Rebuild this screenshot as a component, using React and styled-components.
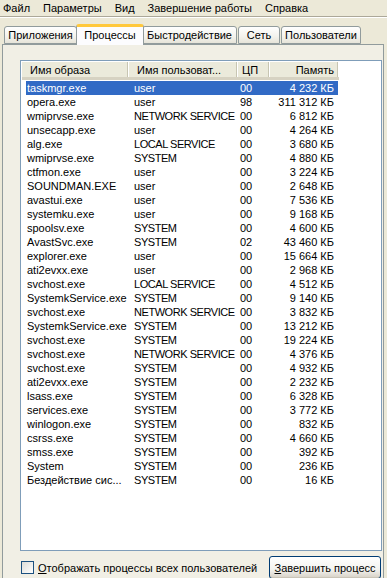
import React from 'react'
import styled, { createGlobalStyle } from 'styled-components'

const GlobalStyle = createGlobalStyle`
  html, body {
    margin: 0;
    padding: 0;
    background: #ece9d8;
  }
  body {
    font-family: Tahoma, "Liberation Sans", Arial, sans-serif;
    font-size: 11px;
    color: #000;
  }
`

const Window = styled.div`
  width: 387px;
  height: 578px;
  overflow: hidden;
  background: #ece9d8;
`

const MenuBar = styled.div`
  display: flex;
  height: 16px;
  align-items: center;
  padding-left: 3px;
  gap: 13px;
  border-bottom: 1px solid #aca899;
  box-shadow: 0 1px 0 #fff;
`

const MenuItem = styled.span`
  line-height: 14px;
`

const TabStrip = styled.div`
  display: flex;
  align-items: flex-end;
  height: 21px;
  margin-top: 7px;
  padding-left: 4px;
  position: relative;
  z-index: 1;
`

const Tab = styled.div`
  box-sizing: border-box;
  width: ${p => p.width}px;
  height: ${p => (p.active ? 21 : 18)}px;
  margin: ${p => (p.active ? '0 -2px 0 -2px' : '0 1px 1px 0')};
  display: flex;
  align-items: ${p => (p.active ? 'flex-start' : 'center')};
  justify-content: center;
  padding-top: ${p => (p.active ? '2px' : '0')};
  border: 1px solid #919b9c;
  border-bottom: ${p => (p.active ? 'none' : '1px solid #919b9c')};
  border-radius: 3px 3px 0 0;
  background: ${p => (p.active ? '#fcfcfe' : 'linear-gradient(#ffffff, #f3f2ec 60%, #e6e4d9)')};
  border-top: ${p => (p.active ? '3px solid #ffc83c' : '1px solid #919b9c')};
  white-space: nowrap;
  position: relative;
  z-index: ${p => (p.active ? 2 : 1)};
`

const Panel = styled.div`
  margin: -1px 3px 0 2px;
  height: 560px;
  border: 1px solid #919b9c;
  background: #f1efe5;
  padding: 15px 1px 0 17px;
  box-sizing: border-box;
`

const ListBox = styled.div`
  box-sizing: border-box;
  width: 362px;
  height: 491px;
  border: 1px solid #7f9db9;
  background: #fff;
  padding: 1px;
  overflow: hidden;
`

const HeaderRow = styled.div`
  display: flex;
  height: 18px;
  background: #fff;
`

const HeaderCell = styled.div`
  box-sizing: border-box;
  width: ${p => p.width}px;
  height: 18px;
  display: flex;
  align-items: center;
  justify-content: ${p => (p.right ? 'flex-end' : 'flex-start')};
  padding: ${p => (p.right ? '0 5px 0 0' : `0 0 0 ${p.pad}px`)};
  background: #ebeadb;
  border-bottom: 3px solid #d6d2c2;
  box-shadow: inset -1px 0 0 #fff, inset -2px 0 0 #c7c5b2;
  white-space: nowrap;
  line-height: 14px;
`

const Rows = styled.div`
  padding: 1px 0 0 4px;
`

const Row = styled.div`
  display: grid;
  grid-template-columns: 102px 109px 32px 69px;
  width: 312px;
  height: 14px;
  line-height: 14px;
  background: ${p => (p.selected ? '#316ac5' : 'transparent')};
  color: ${p => (p.selected ? '#fff' : '#000')};
  white-space: nowrap;
`

const Cell = styled.span`
  padding-left: ${p => p.pad || 0}px;
  padding-right: ${p => (p.right ? 4 : 0)}px;
  text-align: ${p => (p.right ? 'right' : 'left')};
  letter-spacing: ${p => (p.tight ? '-0.45px' : 'normal')};
  overflow: hidden;
`

const Footer = styled.div`
  display: flex;
  align-items: center;
  justify-content: space-between;
  margin-top: 5px;
  height: 23px;
`

const CheckLabel = styled.label`
  display: flex;
  align-items: center;
  gap: 4px;
  margin-left: 1px;
  white-space: nowrap;
`

const CheckBox = styled.span`
  box-sizing: border-box;
  width: 13px;
  height: 13px;
  border: 1px solid #1c5180;
  background: linear-gradient(135deg, #dcdcd7, #ffffff);
`

const Button = styled.button`
  box-sizing: border-box;
  width: 112px;
  height: 23px;
  margin-right: 1px;
  border: 1px solid #003c74;
  border-radius: 3px;
  background: linear-gradient(#ffffff, #f3f3ef 60%, #d6d0c5);
  font: inherit;
  color: #000;
  padding: 0;
  box-shadow: inset 0 -1px 0 #c9c4b7;
`

const tabs = [
  { name: 'Приложения', width: 73 },
  { name: 'Процессы', width: 68, active: true },
  { name: 'Быстродействие', width: 95 },
  { name: 'Сеть', width: 42 },
  { name: 'Пользователи', width: 80 }
]

const processes = [
  ['taskmgr.exe', 'user', '00', '4 232 КБ'],
  ['opera.exe', 'user', '98', '311 312 КБ'],
  ['wmiprvse.exe', 'NETWORK SERVICE', '00', '6 812 КБ'],
  ['unsecapp.exe', 'user', '00', '4 264 КБ'],
  ['alg.exe', 'LOCAL SERVICE', '00', '3 680 КБ'],
  ['wmiprvse.exe', 'SYSTEM', '00', '4 880 КБ'],
  ['ctfmon.exe', 'user', '00', '3 224 КБ'],
  ['SOUNDMAN.EXE', 'user', '00', '2 648 КБ'],
  ['avastui.exe', 'user', '00', '7 536 КБ'],
  ['systemku.exe', 'user', '00', '9 168 КБ'],
  ['spoolsv.exe', 'SYSTEM', '00', '4 600 КБ'],
  ['AvastSvc.exe', 'SYSTEM', '02', '43 460 КБ'],
  ['explorer.exe', 'user', '00', '15 664 КБ'],
  ['ati2evxx.exe', 'user', '00', '2 968 КБ'],
  ['svchost.exe', 'LOCAL SERVICE', '00', '4 512 КБ'],
  ['SystemkService.exe', 'SYSTEM', '00', '9 140 КБ'],
  ['svchost.exe', 'NETWORK SERVICE', '00', '3 832 КБ'],
  ['SystemkService.exe', 'SYSTEM', '00', '13 212 КБ'],
  ['svchost.exe', 'SYSTEM', '00', '19 224 КБ'],
  ['svchost.exe', 'NETWORK SERVICE', '00', '4 376 КБ'],
  ['svchost.exe', 'SYSTEM', '00', '4 932 КБ'],
  ['ati2evxx.exe', 'SYSTEM', '00', '2 232 КБ'],
  ['lsass.exe', 'SYSTEM', '00', '6 328 КБ'],
  ['services.exe', 'SYSTEM', '00', '3 772 КБ'],
  ['winlogon.exe', 'SYSTEM', '00', '832 КБ'],
  ['csrss.exe', 'SYSTEM', '00', '4 660 КБ'],
  ['smss.exe', 'SYSTEM', '00', '392 КБ'],
  ['System', 'SYSTEM', '00', '236 КБ'],
  ['Бездействие сис...', 'SYSTEM', '00', '16 КБ']
]

export default function App() {
  return (
    <Window>
      <GlobalStyle />
      <MenuBar>
        <MenuItem>Файл</MenuItem>
        <MenuItem>Параметры</MenuItem>
        <MenuItem>Вид</MenuItem>
        <MenuItem>Завершение работы</MenuItem>
        <MenuItem>Справка</MenuItem>
      </MenuBar>

      <TabStrip>
        {tabs.map(t => (
          <Tab key={t.name} width={t.width} active={t.active}>{t.name}</Tab>
        ))}
      </TabStrip>

      <Panel>
        <ListBox>
          <HeaderRow>
            <HeaderCell width={107} pad={8}>Имя образа</HeaderCell>
            <HeaderCell width={109} pad={8}>Имя пользоват...</HeaderCell>
            <HeaderCell width={32} pad={4}>ЦП</HeaderCell>
            <HeaderCell width={69} right>Память</HeaderCell>
          </HeaderRow>
          <Rows>
            {processes.map((p, i) => (
              <Row key={i} selected={i === 0}>
                <Cell pad={1}>{p[0]}</Cell>
                <Cell pad={6} tight={p[1] !== 'user'}>{p[1]}</Cell>
                <Cell pad={3}>{p[2]}</Cell>
                <Cell right>{p[3]}</Cell>
              </Row>
            ))}
          </Rows>
        </ListBox>

        <Footer>
          <CheckLabel>
            <CheckBox />
            <span><u>О</u>тображать процессы всех пользователей</span>
          </CheckLabel>
          <Button><u>З</u>авершить процесс</Button>
        </Footer>
      </Panel>
    </Window>
  )
}
